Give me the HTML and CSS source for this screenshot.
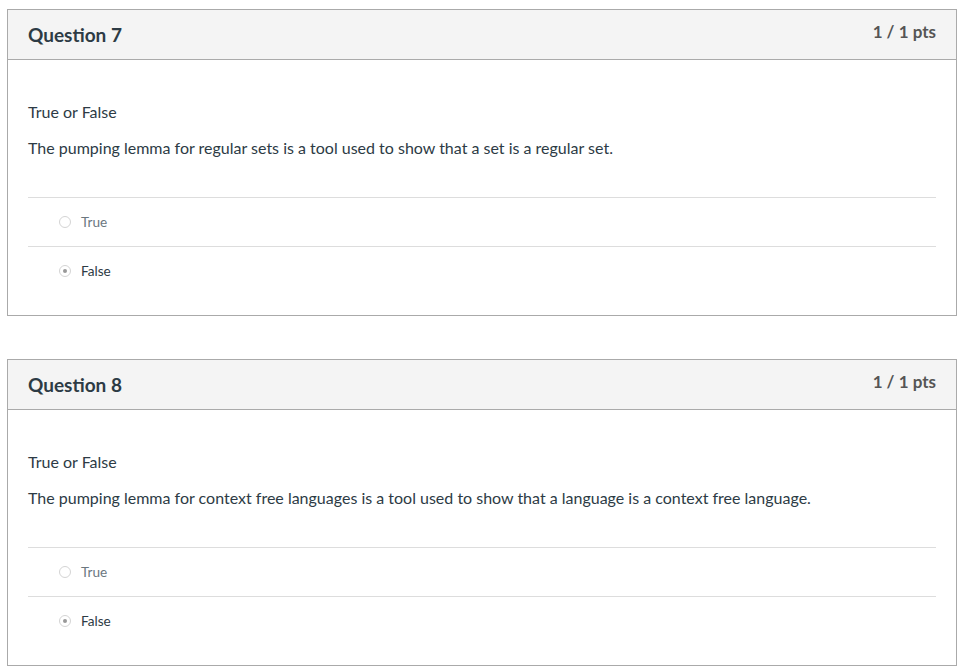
FILE: index.html
```html
<!DOCTYPE html>
<html>
<head>
<meta charset="utf-8">
<link rel="stylesheet" href="styles.css">
</head>
<body>
<div class="quiz">
  <section class="card">
    <header class="card-head">
      <h2 class="q-title">Question 7</h2>
      <span class="q-pts">1 / 1 pts</span>
    </header>
    <div class="card-body">
      <p class="q-type">True or False</p>
      <p class="q-text">The pumping lemma for regular sets is a tool used to show that a set is a regular set.</p>
      <div class="answers">
        <div class="answer"><span class="radio"></span><span class="label muted">True</span></div>
        <div class="answer"><span class="radio checked"></span><span class="label">False</span></div>
      </div>
    </div>
  </section>
  <section class="card">
    <header class="card-head">
      <h2 class="q-title">Question 8</h2>
      <span class="q-pts">1 / 1 pts</span>
    </header>
    <div class="card-body">
      <p class="q-type">True or False</p>
      <p class="q-text">The pumping lemma for context free languages is a tool used to show that a language is a context free language.</p>
      <div class="answers">
        <div class="answer"><span class="radio"></span><span class="label muted">True</span></div>
        <div class="answer"><span class="radio checked"></span><span class="label">False</span></div>
      </div>
    </div>
  </section>
</div>
</body>
</html>
```
FILE: styles.css
```css
html, body {
  margin: 0;
  padding: 0;
  background: #fff;
}
body {
  font-family: Lato, "Open Sans", sans-serif;
  color: #2d3b45;
}
.quiz {
  padding: 9px 8px 0 7px;
  display: flex;
  flex-direction: column;
  gap: 43px;
}
.card {
  border: 1px solid #aaaaaa;
  background: #fff;
}
.card-head {
  height: 49px;
  background: #f4f4f4;
  border-bottom: 1px solid #aaaaaa;
  display: flex;
  justify-content: space-between;
  align-items: flex-start;
  padding: 0 20px;
}
.q-title {
  margin: 0;
  font-size: 19px;
  font-weight: 700;
  line-height: 22px;
  padding-top: 14px;
  color: #2d3b45;
}
.q-pts {
  font-size: 17px;
  font-weight: 700;
  line-height: 20px;
  padding-top: 12px;
  color: #555;
}
.card-body {
  padding: 42px 20px 20px;
}
.q-type, .q-text {
  margin: 0;
  font-size: 16px;
  line-height: 20px;
}
.q-type {
  margin-bottom: 16px;
}
.answers {
  margin-top: 39px;
}
.answer {
  height: 48px;
  border-top: 1px solid #dddddd;
  display: flex;
  align-items: center;
  padding-left: 31px;
}
.radio {
  width: 10px;
  height: 10px;
  border: 1px solid #d4d4d4;
  border-radius: 50%;
  display: flex;
  align-items: center;
  justify-content: center;
  margin-right: 10px;
}
.radio.checked::after {
  content: "";
  width: 4px;
  height: 4px;
  border-radius: 50%;
  background: #999;
}
.label {
  font-size: 13.6px;
  color: #2d3b45;
}
.label.muted {
  color: #6b7780;
}
```
